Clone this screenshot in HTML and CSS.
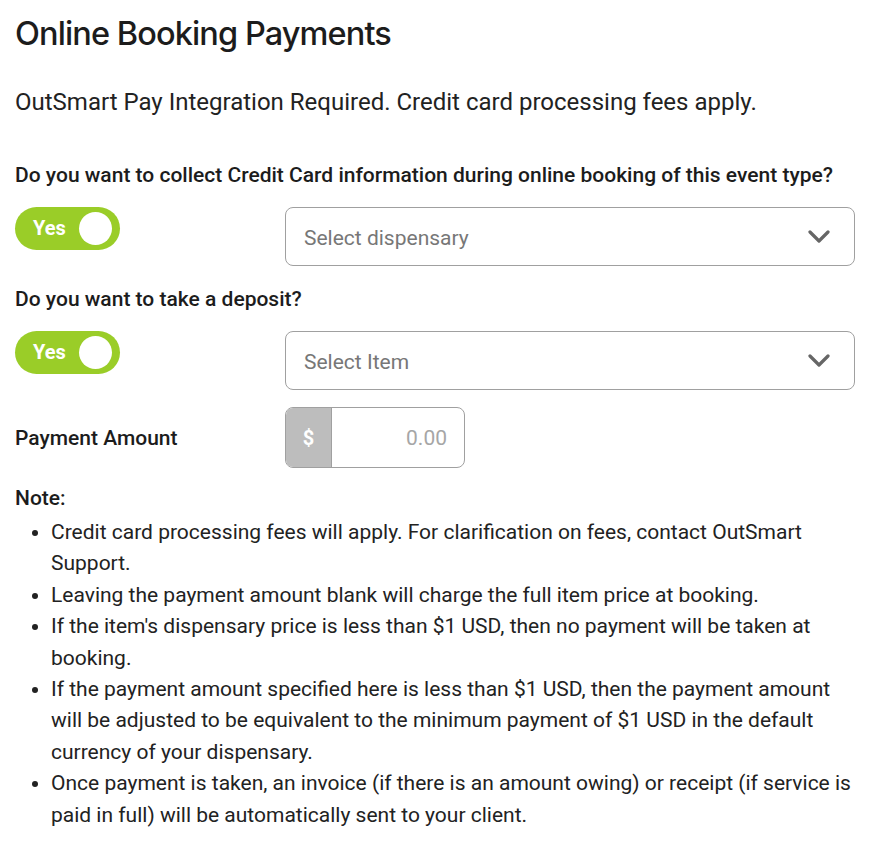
FILE: index.html
```html
<!DOCTYPE html>
<html>
<head>
<meta charset="utf-8">
<link rel="stylesheet" href="styles.css">
</head>
<body>
<div class="page">
  <h1 class="title">Online Booking Payments</h1>
  <p class="intro">OutSmart Pay Integration Required. Credit card processing fees apply.</p>

  <div class="question">Do you want to collect Credit Card information during online booking of this event type?</div>
  <div class="row">
    <div class="left">
      <div class="toggle"><span class="toggle-label">Yes</span><span class="knob"></span></div>
    </div>
    <div class="select">
      <span class="placeholder">Select dispensary</span>
      <svg class="chev" width="22" height="14" viewBox="0 0 22 14"><path d="M2 2 L11 11 L20 2" fill="none" stroke="#666" stroke-width="3.2" stroke-linecap="round" stroke-linejoin="round"/></svg>
    </div>
  </div>

  <div class="question">Do you want to take a deposit?</div>
  <div class="row">
    <div class="left">
      <div class="toggle"><span class="toggle-label">Yes</span><span class="knob"></span></div>
    </div>
    <div class="select">
      <span class="placeholder">Select Item</span>
      <svg class="chev" width="22" height="14" viewBox="0 0 22 14"><path d="M2 2 L11 11 L20 2" fill="none" stroke="#666" stroke-width="3.2" stroke-linecap="round" stroke-linejoin="round"/></svg>
    </div>
  </div>

  <div class="row amount-row">
    <div class="left"><span class="label">Payment Amount</span></div>
    <div class="input-group">
      <span class="addon">$</span>
      <span class="value">0.00</span>
    </div>
  </div>

  <div class="note">
    <div class="note-title">Note:</div>
    <ul class="note-list">
      <li>Credit card processing fees will apply. For clarification on fees, contact OutSmart Support.</li>
      <li>Leaving the payment amount blank will charge the full item price at booking.</li>
      <li>If the item's dispensary price is less than $1 USD, then no payment will be taken at booking.</li>
      <li>If the payment amount specified here is less than $1 USD, then the payment amount will be adjusted to be equivalent to the minimum payment of $1 USD in the default currency of your dispensary.</li>
      <li>Once payment is taken, an invoice (if there is an amount owing) or receipt (if service is paid in full) will be automatically sent to your client.</li>
    </ul>
  </div>
</div>
</body>
</html>
```

FILE: styles.css
```css
* { box-sizing: border-box; }
body {
  margin: 0;
  background: #fff;
  font-family: Roboto, "Liberation Sans", sans-serif;
  color: #1f1f1f;
}
.page {
  width: 855px;
  padding: 14px 0 0 15px;
}
.title {
  margin: 0;
  font-family: Inter, "Liberation Sans", sans-serif;
  font-weight: 500;
  font-size: 32.5px;
  letter-spacing: -0.9px;
  line-height: 40px;
  color: #1c1c1c;
}
.intro {
  margin: 32px 0 0;
  font-size: 24px;
  line-height: 32px;
  color: #222;
}
.question {
  font-size: 21px;
  font-weight: 500;
  line-height: 28px;
  color: #1c1c1c;
  margin-top: 43px;
}
.question + .row { margin-top: 18px; }
.row + .question { margin-top: 19px; }
.row {
  display: flex;
  align-items: flex-start;
}
.left {
  width: 270px;
  flex: none;
}
.toggle {
  width: 105px;
  height: 43px;
  border-radius: 22px;
  background: #9acd28;
  display: flex;
  align-items: center;
  padding: 0 8px 0 18px;
  justify-content: space-between;
}
.toggle-label {
  color: #fff;
  font-weight: 700;
  font-size: 20px;
  margin-top: -1px;
}
.knob {
  width: 33px;
  height: 33px;
  border-radius: 50%;
  background: #fff;
}
.select {
  flex: 1;
  height: 59px;
  border: 1px solid #a0a0a0;
  border-radius: 8px;
  display: flex;
  align-items: center;
  justify-content: space-between;
  padding: 0 24px 0 18px;
}
.placeholder {
  font-size: 21px;
  color: #777;
  margin-top: 2px;
}
.chev { display: block; }
.amount-row {
  margin-top: 17px;
  align-items: center;
}
.label {
  font-size: 21px;
  font-weight: 500;
  color: #1c1c1c;
}
.input-group {
  width: 180px;
  height: 61px;
  border: 1px solid #a0a0a0;
  border-radius: 8px;
  display: flex;
  overflow: hidden;
}
.addon {
  width: 46px;
  background: #bdbdbd;
  color: #fff;
  font-weight: 700;
  font-size: 20px;
  display: flex;
  align-items: center;
  justify-content: center;
  border-right: 1px solid #a0a0a0;
}
.value {
  flex: 1;
  padding-right: 17px;
  font-size: 21px;
  color: #a6a6a6;
  display: flex;
  align-items: center;
  justify-content: flex-end;
}
.note { margin-top: 16px; }
.note-title {
  font-size: 21px;
  font-weight: 500;
  line-height: 28px;
  color: #1c1c1c;
}
.note-list {
  margin: 5px 0 0;
  padding-left: 36px;
  font-size: 21px;
  line-height: 31.4px;
  color: #222;
}
```
